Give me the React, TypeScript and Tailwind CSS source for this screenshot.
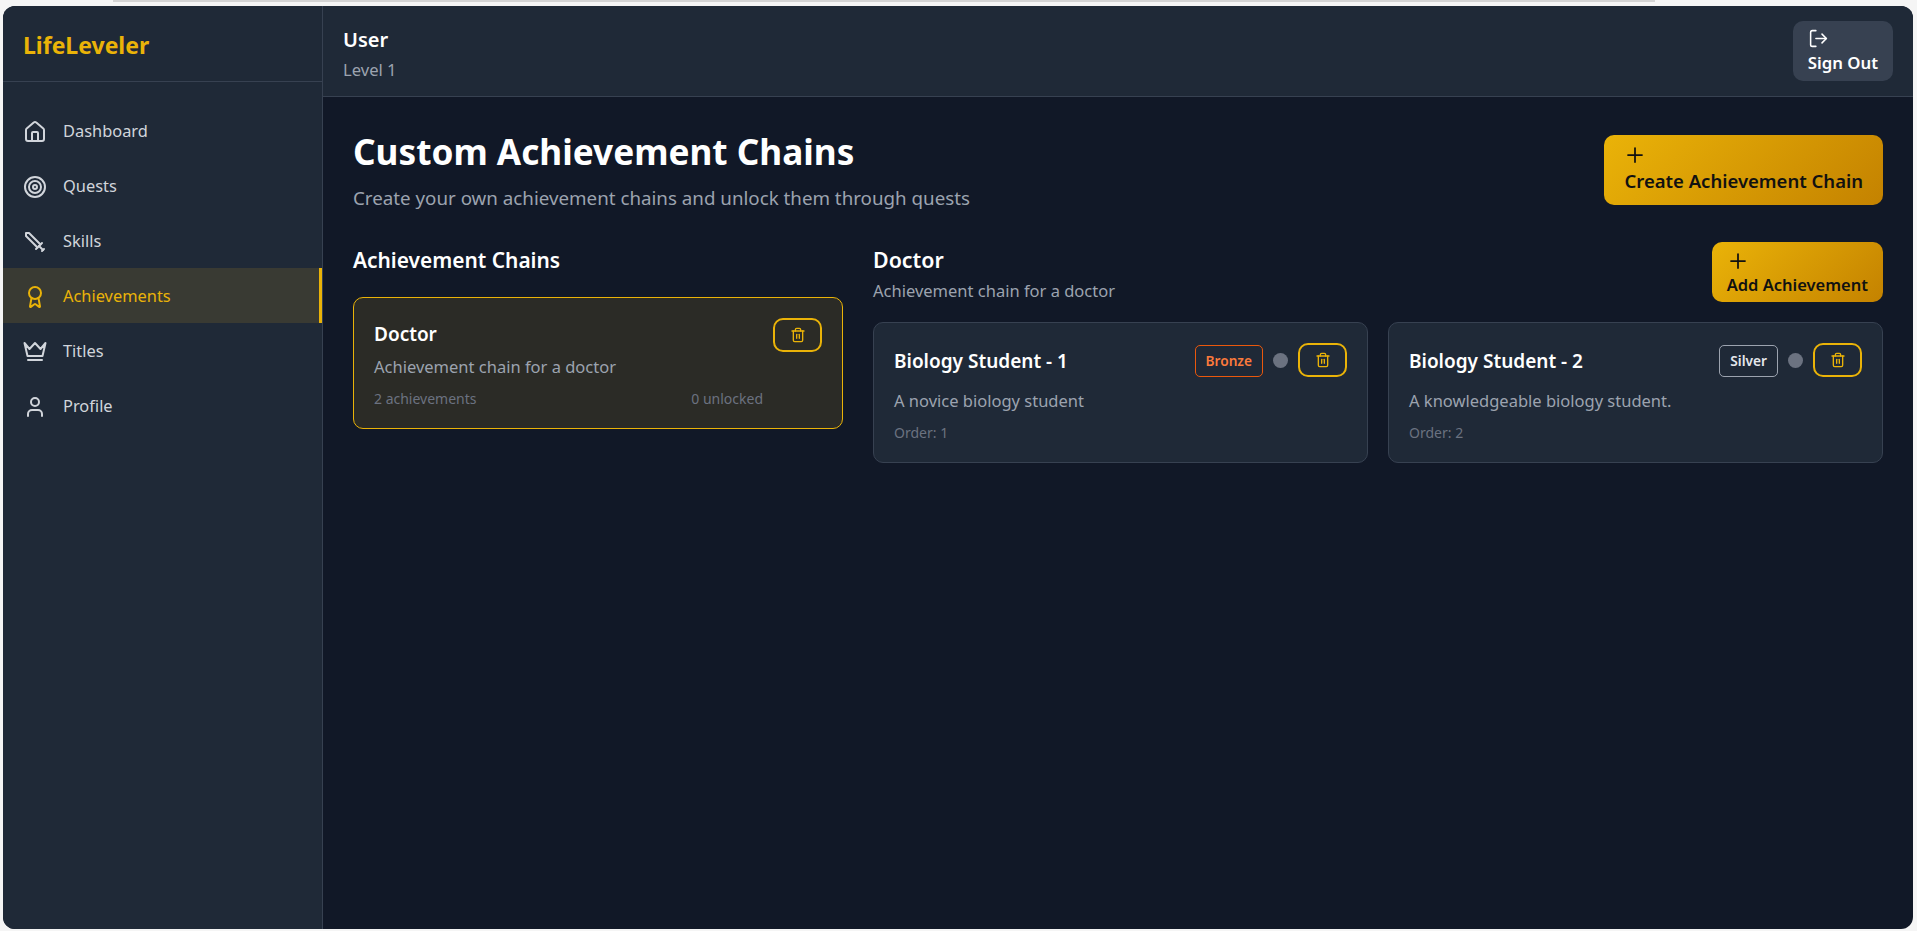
import { Award, House, LogOut, Plus, Target, Trash2, User } from 'lucide-react';
import type { SVGProps } from 'react';

// lucide's current sword points the other way, so these two are drawn by hand
function SwordIcon(props: SVGProps<SVGSVGElement>) {
  return (
    <svg viewBox="0 0 24 24" fill="none" stroke="currentColor" strokeLinecap="round" strokeLinejoin="round" {...props}>
      <polyline points="14.5 17.5 3 6 3 3 6 3 17.5 14.5" />
      <line x1="13" y1="19" x2="19" y2="13" />
      <line x1="16" y1="16" x2="20" y2="20" />
      <line x1="19" y1="21" x2="21" y2="19" />
    </svg>
  );
}

function CrownIcon(props: SVGProps<SVGSVGElement>) {
  return (
    <svg viewBox="0 0 24 24" fill="none" stroke="currentColor" strokeLinecap="round" strokeLinejoin="round" {...props}>
      <path d="M1.5 3 6.5 9 12 3l5.5 6 5-6-3 13h-15Z" />
      <path d="M5 20h14" />
    </svg>
  );
}

const navItems = [
  { label: 'Dashboard', icon: House },
  { label: 'Quests', icon: Target },
  { label: 'Skills', icon: SwordIcon },
  { label: 'Achievements', icon: Award, active: true },
  { label: 'Titles', icon: CrownIcon },
  { label: 'Profile', icon: User },
];

const achievements = [
  {
    title: 'Biology Student - 1',
    description: 'A novice biology student',
    order: 1,
    tier: 'Bronze',
    tierClass: 'border-[#ea580c] text-[#fb7a3c]',
  },
  {
    title: 'Biology Student - 2',
    description: 'A knowledgeable biology student.',
    order: 2,
    tier: 'Silver',
    tierClass: 'border-[#9ca3af] text-[#e5e7eb]',
  },
];

function DeleteButton() {
  return (
    <button className="flex h-[34px] w-[49px] shrink-0 items-center justify-center rounded-[10px] border-2 border-[#eab308] text-[#eab308]">
      <Trash2 className="h-4 w-4" />
    </button>
  );
}

function GoldButton({ label, big }: { label: string; big?: boolean }) {
  return (
    <button
      className={
        big
          ? 'h-[70px] rounded-[10px] bg-[linear-gradient(135deg,#eab308,#c48200)] px-5 pt-[6px] pb-[9px] text-left text-[18.5px] leading-[27px] font-semibold text-[#111111]'
          : 'h-[60px] rounded-[10px] bg-[linear-gradient(135deg,#eab308,#c48200)] px-[15px] pt-[6px] pb-[4px] text-left text-[16.5px] leading-[24px] font-semibold text-[#111111]'
      }
    >
      <Plus className="-ml-px h-6 w-6" strokeWidth={1.75} />
      {label}
    </button>
  );
}

function Sidebar() {
  return (
    <aside className="flex w-[320px] shrink-0 flex-col border-r border-[#374151] bg-[#1f2937]">
      <div className="flex h-[76px] items-center border-b border-[#374151] px-5 pt-[3px]">
        <span className="text-[23px] font-bold text-[#eab308]">LifeLeveler</span>
      </div>
      <nav className="flex flex-col py-[21px]">
        {navItems.map(({ label, icon: Icon, active }) => (
          <a
            key={label}
            className={
              active
                ? 'flex h-[55px] items-center gap-4 border-r-[3px] border-[#eab308] bg-[#393a33] px-5 pt-[2px] text-[#eab308]'
                : 'flex h-[55px] items-center gap-4 px-5 pt-[2px] text-[#d1d5db]'
            }
          >
            <Icon className="h-6 w-6" strokeWidth={2} />
            <span className="text-[16.4px]">{label}</span>
          </a>
        ))}
      </nav>
    </aside>
  );
}

function Header() {
  return (
    <header className="flex h-[91px] shrink-0 items-center justify-between border-b border-[#374151] bg-[#1f2937] px-5">
      <div className="self-start pt-[19px]">
        <div className="text-[20px] leading-[30px] font-semibold text-white">User</div>
        <div className="mt-[3px] text-[16.6px] leading-[24px] text-[#9ca3af]">Level 1</div>
      </div>
      <button className="h-[60px] rounded-[10px] bg-[#374151] px-[15px] pt-px text-left text-[16.8px] leading-[26px] font-semibold text-white">
        <LogOut className="mb-px h-[21px] w-[21px]" strokeWidth={1.75} />
        Sign Out
      </button>
    </header>
  );
}

export default function App() {
  return (
    <div className="relative h-screen overflow-hidden bg-[#f5f5f5] pt-[6px] pr-[4px] pb-[2px] pl-[3px] font-['Noto_Sans','Liberation_Sans',sans-serif]">
      <div className="absolute top-0 left-[113px] h-[2px] w-[1542px] bg-[#d4d4d4]" />
      <div className="relative flex h-full overflow-hidden rounded-xl bg-[#111827]">
        <Sidebar />
        <div className="flex min-w-0 flex-1 flex-col">
          <Header />
          <main className="flex-1 p-[30px]">
            <div className="flex items-start justify-between">
              <div>
                <h1 className="text-[35.2px] leading-[49px] font-bold text-white">Custom Achievement Chains</h1>
                <p className="mt-[8px] text-[18.75px] leading-[28px] text-[#9ca3af]">
                  Create your own achievement chains and unlock them through quests
                </p>
              </div>
              <div className="pt-[8px]">
                <GoldButton label="Create Achievement Chain" big />
              </div>
            </div>

            <div className="mt-[33px] grid grid-cols-3 gap-[30px]">
              <section>
                <h2 className="text-[20.9px] leading-[30px] font-semibold text-white">Achievement Chains</h2>
                <div className="mt-[22px] h-[132px] rounded-[10px] border border-[#eab308] bg-[#2b2b26] p-5">
                  <div className="flex items-start justify-between">
                    <div>
                      <h3 className="mt-[3px] text-[19px] leading-[27px] font-semibold text-white">Doctor</h3>
                      <p className="mt-[7px] text-[16.5px] leading-[24px] text-[#9ca3af]">Achievement chain for a doctor</p>
                    </div>
                    <DeleteButton />
                  </div>
                  <div className="mt-[10px] flex justify-between pr-[59px] text-[14px] leading-[20px] text-[#6b7280]">
                    <span>2 achievements</span>
                    <span>0 unlocked</span>
                  </div>
                </div>
              </section>

              <section className="col-span-2">
                <div className="flex items-start justify-between">
                  <div>
                    <h2 className="text-[21.4px] leading-[30px] font-semibold text-white">Doctor</h2>
                    <p className="mt-[4px] text-[16.5px] leading-[24px] text-[#9ca3af]">Achievement chain for a doctor</p>
                  </div>
                  <div className="-mt-[3px]">
                    <GoldButton label="Add Achievement" />
                  </div>
                </div>
                <div className="mt-[19px] grid grid-cols-2 gap-5">
                  {achievements.map((item) => (
                    <div key={item.title} className="h-[141px] rounded-[10px] border border-[#374151] bg-[#1f2937] p-5">
                      <div className="flex items-center justify-between">
                        <h3 className="pt-[2px] text-[19px] leading-[27px] font-semibold text-white">{item.title}</h3>
                        <div className="flex items-center gap-[10px]">
                          <span className={`mt-[1px] rounded-[5px] border px-[10px] py-[5px] text-[13.7px] leading-[20px] font-semibold ${item.tierClass}`}>
                            {item.tier}
                          </span>
                          <span className="h-[15px] w-[15px] rounded-full bg-[#6b7280]" />
                          <DeleteButton />
                        </div>
                      </div>
                      <p className="mt-[12px] text-[16.5px] leading-[24px] text-[#9ca3af]">{item.description}</p>
                      <p className="mt-[10px] text-[14px] leading-[20px] text-[#6b7280]">Order: {item.order}</p>
                    </div>
                  ))}
                </div>
              </section>
            </div>
          </main>
        </div>
      </div>
    </div>
  );
}
